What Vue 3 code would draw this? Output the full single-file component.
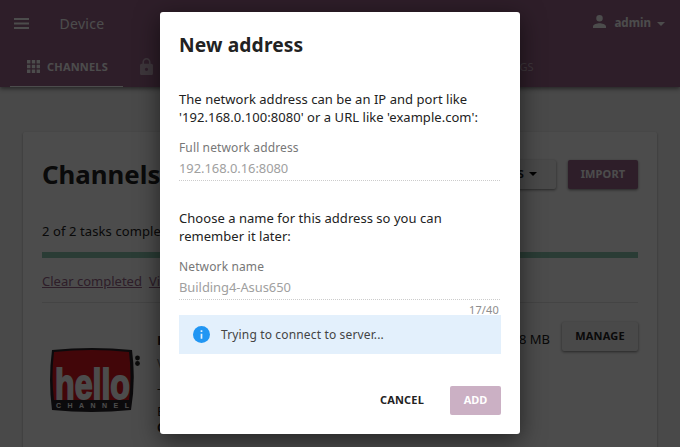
<script setup>
import { ref } from 'vue'

const address = ref('192.168.0.16:8080')
const name = ref('Building4-Asus650')
</script>

<template>
  <div class="screen">
    <header class="header">
      <div class="bar">
        <svg class="menu" viewBox="0 0 15 11"><path d="M0 0h15v2H0zM0 4.500h15v2H0zM0 9h15v2H0z" /></svg>
        <span class="device">Device</span>
        <svg class="person" viewBox="4 4 16 16"><path d="M12 12a4 4 0 1 0 0-8 4 4 0 0 0 0 8zm0 2c-2.67 0-8 1.34-8 4v2h16v-2c0-2.66-5.33-4-8-4z" /></svg>
        <span class="user">admin</span>
        <svg class="caret" viewBox="0 0 8 4"><path d="M0 0h8L4 4z" /></svg>
      </div>
      <nav class="tabs">
        <div class="tab active">
          <svg class="grid" viewBox="0 0 13 13"><path d="M0 0h3.4v3.4H0zM4.8 0h3.4v3.4H4.8zM9.6 0H13v3.4H9.6zM0 4.8h3.4v3.4H0zM4.8 4.8h3.4v3.4H4.8zM9.6 4.8H13v3.4H9.6zM0 9.6h3.4V13H0zM4.8 9.6h3.4V13H4.8zM9.6 9.6H13V13H9.6z" /></svg>
          <span>CHANNELS</span>
        </div>
        <div class="tab">
          <svg class="lock" viewBox="4 1 16 21"><path d="M18 8h-1V6c0-2.76-2.24-5-5-5S7 3.240 7 6v2H6c-1.100 0-2 .9-2 2v10c0 1.100.9 2 2 2h12c1.100 0 2-.9 2-2V10c0-1.100-.9-2-2-2zm-6 9c-1.100 0-2-.9-2-2s.9-2 2-2 2 .9 2 2-.9 2-2 2zm3.100-9H8.900V6c0-1.710 1.390-3.100 3.100-3.100s3.100 1.390 3.100 3.100v2z" /></svg>
        </div>
        <div class="tab last">SETTINGS</div>
      </nav>
    </header>

    <main class="card">
      <div class="title-row">
        <h1>Channels</h1>
        <button class="btn options">OPTIONS<svg class="caret" viewBox="0 0 8 4"><path d="M0 0h8L4 4z" /></svg></button>
        <button class="btn primary">IMPORT</button>
      </div>
      <p class="tasks">2 of 2 tasks completed</p>
      <div class="progress"></div>
      <div class="links"><a>Clear completed</a><a>View task manager</a></div>
      <section class="channel">
        <svg class="logo" viewBox="0 0 92 66">
          <path d="M3 3Q43-1 83 3Q87 33 82 63Q43 67 3 63Q-1 33 3 3Z" fill="#262328" />
          <path d="M5 5Q43 1 80 5Q83 30 80 53H5Q2 30 5 5Z" fill="#dc1420" />
          <text class="hello" x="6" y="52" textLength="75" lengthAdjust="spacingAndGlyphs">hello</text>
          <text class="word" x="7" y="60.500" textLength="73">CHANNEL</text>
          <circle cx="88.500" cy="11" r="2.400" fill="#222" /><circle cx="88.500" cy="16.500" r="2.400" fill="#222" />
        </svg>
        <div class="about">
          <b>Hello Channel</b>
          <span class="version">Version 6</span>
          <span class="dash">—</span>
          <span class="lang">English</span>
          <b class="code">Core</b>
        </div>
        <span class="size">178 MB</span>
        <button class="btn manage">MANAGE</button>
      </section>
    </main>

    <div class="backdrop">
      <div class="modal">
        <h2>New address</h2>
        <p class="copy">The network address can be an IP and port like<br>'192.168.0.100:8080' or a URL like 'example.com':</p>
        <div class="field"><label>Full network address</label><div class="value">{{ address }}</div></div>
        <p class="copy second">Choose a name for this address so you can<br>remember it later:</p>
        <div class="field"><label>Network name</label><div class="value">{{ name }}</div></div>
        <div class="count">{{ name.length }}/40</div>
        <div class="alert">
          <svg viewBox="2 2 20 20"><circle cx="12" cy="12" r="10" fill="#2196f3" /><path d="M11 7h2v2h-2zM11 11h2v6h-2z" fill="#e3f0fc" /></svg>
          <span>Trying to connect to server...</span>
        </div>
        <div class="actions"><button class="cancel">CANCEL</button><button class="add">ADD</button></div>
      </div>
    </div>
  </div>
</template>

<style>
body { margin: 0; }
</style>

<style scoped>
* { box-sizing: border-box; }
.screen { position: relative; width: 680px; height: 447px; overflow: hidden; background: #f3f3f3; color: #222; font: 13px/18px "Noto Sans", sans-serif; }
button { font-family: inherit; border: 0; padding: 0; }
svg { display: block; flex: none; }
.header { height: 87px; background: #996489; color: #fff; box-shadow: 0 2px 4px rgba(0,0,0,.45); }
.header svg { fill: currentColor; }
.bar { height: 47px; display: flex; align-items: center; padding: 0 15px 0 14px; }
.menu { width: 15px; height: 11px; }
.device { margin-left: 30.5px; font-size: 14px; letter-spacing: .3px; flex: 1; }
.person { width: 13px; height: 13px; margin-top: -4px; }
.user { margin-left: 8px; font-weight: 700; font-size: 11.6px; margin-top: -1px; }
.caret { width: 8px; height: 4px; margin-left: 6px; }
.bar .caret { margin-top: 1px; }
.tabs { height: 40px; padding-left: 10px; display: flex; }
.tab { width: 113px; display: flex; align-items: center; font-size: 11px; letter-spacing: .2px; font-weight: 700; padding-left: 17px; color: #cdb5c6; }
.tab.active { color: #fff; border-bottom: 1px solid #fff; }
.grid { width: 13px; height: 13px; margin-right: 7px; }
.lock { width: 13px; height: 17px; margin-top: -1px; }
.last { width: auto; margin-left: 228.5px; font-weight: 400; }
.card { width: 634px; height: 400px; margin: 45px 0 0 23px; padding: 0 19px; background: #fff; border-radius: 2px; box-shadow: 0 1px 2px rgba(0,0,0,.4); }
.title-row { display: flex; align-items: center; padding-top: 28px; height: 57px; }
h1 { font-size: 25.8px; line-height: 30px; margin: -2px 0 0; flex: 1; }
.btn { height: 29px; font-size: 11px; font-weight: 700; border-radius: 2px; display: flex; align-items: center; justify-content: center; box-shadow: 0 1px 3px rgba(0,0,0,.5); background: #f3f3f3; color: #222; letter-spacing: .15px; padding-bottom: 1.500px; }
.options { width: 100px; margin-right: 12px; }
.options .caret { margin-left: 5px; margin-right: 2px; }
.primary { width: 70px; background: #996489; color: #fff; }
.tasks { margin: 33px 0 0; letter-spacing: .1px; }
.progress { height: 6px; margin-top: 12px; background: #8cc9b2; }
.links { display: flex; gap: 7px; height: 45px; padding-top: 14px; color: #996489; text-decoration: underline; border-bottom: 1px solid #e5e5e5; }
.channel { display: flex; align-items: flex-start; }
.logo { width: 92px; height: 66px; margin: 44px 0 0 7px; }
.hello { font: 700 43px "Liberation Sans", sans-serif; fill: #fff; stroke: #fff; stroke-width: 1.8px; }
.word { font: 700 7px "Liberation Sans", sans-serif; fill: #fff; }
.about { margin: 28px 0 0 16px; flex: 1; display: flex; flex-direction: column; }
.version { margin-top: 6px; color: #777; font-size: 12px; }
.dash { margin-top: 6px; }
.lang { margin-top: 5px; }
.code { margin-top: -1px; font-size: 12px; }
.size { margin: 27px 12px 0 0; }
.manage { width: 76px; margin-top: 19px; letter-spacing: .2px; }
.backdrop { position: absolute; inset: 0; background: rgba(0,0,0,.7); padding: 12px 160px; }
.modal { height: 422px; padding: 0 19px; background: #fff; border-radius: 3px; box-shadow: 0 6px 24px rgba(0,0,0,.55); }
h2 { margin: 0; padding-top: 20px; font-size: 19.2px; line-height: 26px; letter-spacing: .15px; }
.copy { margin: 32px 0 0; letter-spacing: .04px; }
.copy.second { margin-top: 28px; }
.field { margin-top: 12px; height: 43px; border-bottom: 1px dotted #ccc; font-size: 12px; color: #777; width: 321px; }
.field label { display: block; line-height: 18px; padding-top: 1px; letter-spacing: .13px; }
.value { font-size: 12.95px; line-height: 18px; margin-top: 2px; color: #a0a0a0; letter-spacing: -.05px; }
.count { text-align: right; width: 320px; height: 15px; padding-top: 1px; font-size: 11px; line-height: 18px; color: #8d8d8d; letter-spacing: .15px; }
.alert { width: 322px; height: 39px; background: #e3f0fc; display: flex; align-items: center; padding-left: 14px; gap: 11px; font-size: 12px; letter-spacing: .15px; color: #444; }
.alert svg { width: 17px; height: 17px; }
.actions { display: flex; width: 322px; margin-top: 32px; height: 29px; }
.actions button { font-size: 11px; font-weight: 700; border-radius: 2px; padding-bottom: 2px; }
.actions .cancel { margin-left: auto; width: 84px; margin-right: 6px; background: #fff; color: #222; letter-spacing: .15px; }
.add { width: 51px; background: #cbb0c4; color: #fff; }
</style>
